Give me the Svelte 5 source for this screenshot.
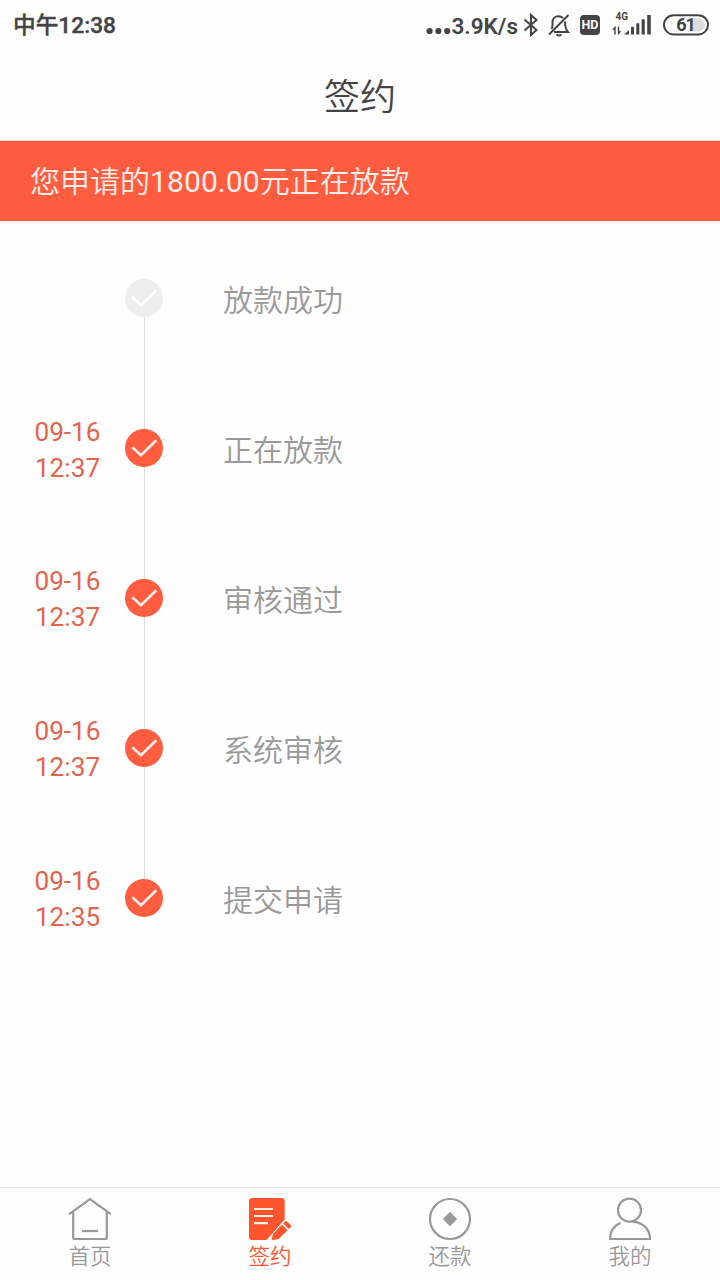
<script lang="ts">
    type Step = { label: string; date?: string; time?: string };

    const steps: Step[] = [
        { label: "放款成功" },
        { label: "正在放款", date: "09-16", time: "12:37" },
        { label: "审核通过", date: "09-16", time: "12:37" },
        { label: "系统审核", date: "09-16", time: "12:37" },
        { label: "提交申请", date: "09-16", time: "12:35" },
    ];

    const tabs = [
        { id: "home", label: "首页" },
        { id: "sign", label: "签约" },
        { id: "repay", label: "还款" },
        { id: "mine", label: "我的" },
    ];

    let active = $state("sign");
</script>

<div class="screen">
    <div class="status">
        <span class="clock">中午12:38</span>
        <div class="indicators">
            <svg class="dots" width="25" height="8" viewBox="0 0 25 8">
                <circle cx="3.6" cy="4" r="3.1" />
                <circle cx="12.4" cy="4" r="3.1" />
                <circle cx="21.2" cy="4" r="3.1" />
            </svg>
            <span class="speed">3.9K/s</span>
            <svg class="bluetooth" width="16" height="24" viewBox="0 0 16 24">
                <path d="M1.5 6.5 L13.5 17 L8 22 V2 L13.5 7 L1.5 17.5" />
            </svg>
            <svg class="bell" width="24" height="24" viewBox="0 0 24 24">
                <path d="M4.5 16 C6 14 5.5 12 5.5 9.5 C5.5 5.5 8 3.2 11.5 3.2 C13.5 3.2 15 4 16 5.2" />
                <path d="M17.8 8.5 C18 13 18 15.5 21 19 H7" />
                <path d="M21.5 2 L2 21.5" />
                <path d="M9.5 21.5 Q12 23.5 14.5 21.5" />
            </svg>
            <svg class="hd" width="20" height="20" viewBox="0 0 20 20">
                <rect width="20" height="20" rx="4" />
                <text x="10" y="14.4" text-anchor="middle">HD</text>
            </svg>
            <svg class="signal" width="40" height="26" viewBox="0 0 40 26">
                <text x="3.5" y="8">4G</text>
                <path class="arrows" d="M3 22.5 V15.5 L1 17.8 M6.5 14.5 V21.5 L8.5 19.2" />
                <path d="M12 22.5 L17 18 V22.5Z" />
                <rect x="19" y="14.8" width="3" height="7.7" rx="0.5" />
                <rect x="24.3" y="11.2" width="3" height="11.3" rx="0.5" />
                <rect x="29.6" y="7.2" width="3.2" height="15.3" rx="0.5" />
                <rect x="35.2" y="3" width="3.6" height="19.5" rx="0.5" />
            </svg>
            <svg class="battery" width="46" height="22" viewBox="0 0 46 22">
                <path class="level" d="M28 4.5 H35.5 A6.5 6.5 0 0 1 35.5 17.5 H28Z" />
                <rect x="1" y="1.2" width="44" height="19.2" rx="9.6" />
                <text x="22.5" y="16.8" text-anchor="middle">61</text>
            </svg>
        </div>
    </div>

    <header>签约</header>

    <div class="banner">您申请的<span>1800.00</span>元正在放款</div>

    <main>
        {#each steps as step}
            <div class="step">
                <div class="when">
                    {#if step.date}
                        <span>{step.date}</span>
                        <span>{step.time}</span>
                    {/if}
                </div>
                <div class="rail">
                    <i></i>
                    <svg class="node" class:done={step.date} width="38" height="38" viewBox="0 0 38 38">
                        <circle cx="19" cy="19" r="19" />
                        <path d="M7.3 18.2 L16 26.2 L31.3 11.3" />
                    </svg>
                    <i></i>
                </div>
                <div class="label">{step.label}</div>
            </div>
        {/each}
    </main>

    <nav>
        {#each tabs as tab}
            <button class:active={active === tab.id} onclick={() => (active = tab.id)}>
                <svg width="44" height="44" viewBox="0 0 44 44">
                    {#if tab.id === "home"}
                        <path d="M1.2 17.2 L22 2.2 L42.8 17.2" />
                        <path d="M5.2 14.5 V40.2 Q5.2 42 7 42 H37 Q38.8 42 38.8 40.2 V14.5" />
                        <path d="M14 34 H30" />
                    {:else if tab.id === "sign"}
                        <path class="fill" d="M4 1 H33.7 Q36.7 1 36.7 4 V22.5 L18.5 43 H4 Q1 43 1 40 V4 Q1 1 4 1Z" />
                        <path class="lines" d="M6 12 H25 M6 19 H25 M6 26.2 H20" />
                        <path class="fill" d="M23.4 43.2 L25 36.8 L34 27.8 L39.6 33.2 L30.6 42Z M35.2 26.5 L37.2 24.4 Q38 23.7 38.9 24.5 L42.8 28.1 Q43.6 29 42.8 29.9 L40.7 32Z" />
                    {:else if tab.id === "repay"}
                        <circle cx="22" cy="22" r="20" />
                        <path class="fill" d="M22 14.8 L29.2 22 L22 29.2 L14.8 22Z" />
                    {:else}
                        <ellipse cx="21.5" cy="13.2" rx="11.5" ry="11.5" />
                        <path d="M12.5 25.8 C6 28.8 2 34.5 2 42 H42 C42 32 34.5 24.8 24.5 24.8" />
                    {/if}
                </svg>
                <span>{tab.label}</span>
            </button>
        {/each}
    </nav>
</div>

<style>
    :global(body) {
        margin: 0;
        background: #fefefe;
    }

    .screen {
        width: 720px;
        height: 1280px;
        display: flex;
        flex-direction: column;
        background: #fefefe;
        font-family: Roboto, "Noto Sans CJK SC", sans-serif;
        overflow: hidden;
    }

    .status {
        height: 50px;
        box-sizing: border-box;
        padding: 0 11px 0 13px;
        display: flex;
        justify-content: space-between;
        align-items: center;
        color: #444;
        font-size: 22.5px;
        font-weight: 700;
    }

    .clock {
        line-height: 30px;
        font-size: 22.7px;
        font-weight: 500;
        -webkit-text-stroke: 0.4px #444;
        padding-top: 2px;
    }

    .indicators {
        display: flex;
        align-items: center;
    }

    .indicators svg {
        display: block;
        fill: #444;
    }

    .indicators .dots {
        margin-top: 12px;
    }

    .speed {
        margin: 2px 5px 0 1px;
        line-height: 30px;
        font-weight: 600;
    }

    .indicators .bluetooth,
    .indicators .bell {
        fill: none;
        stroke: #444;
        stroke-width: 2;
    }

    .bell {
        margin-left: 8px;
    }

    .hd {
        margin-left: 9px;
    }

    .hd text {
        fill: #fff;
        font-size: 12.5px;
    }

    .signal {
        margin-left: 12px;
    }

    .signal text {
        font-size: 10px;
    }

    .signal .arrows {
        fill: none;
        stroke: #444;
        stroke-width: 1.4;
    }

    .battery {
        margin-left: 11px;
    }

    .battery rect {
        fill: none;
        stroke: #444;
        stroke-width: 2;
    }

    .battery .level {
        fill: #ddd;
    }

    .battery text {
        font-size: 18px;
        letter-spacing: -1px;
    }

    header {
        height: 91px;
        box-sizing: border-box;
        padding-top: 3px;
        line-height: 90px;
        text-align: center;
        font-size: 36px;
        font-weight: 350;
        color: #444;
        border-bottom: 1px solid #f6d5cd;
    }

    .banner {
        height: 80px;
        line-height: 81px;
        padding-left: 30px;
        background: #ff5c40;
        color: #ffefeb;
        font-size: 30px;
        font-weight: 350;
    }

    .banner span {
        font-weight: 400;
        letter-spacing: 0.1px;
    }

    main {
        flex: 1;
        padding-top: 2px;
    }

    .step {
        height: 150px;
        display: grid;
        grid-template-columns: 91px 38px 1fr;
        padding-left: 34px;
        align-items: center;
    }

    .when {
        display: flex;
        flex-direction: column;
        width: 67px;
        padding-top: 1px;
        text-align: center;
        white-space: nowrap;
        font-size: 26.2px;
        line-height: 36px;
        color: #e4644b;
    }

    .step:nth-child(2) .when {
        padding-top: 3px;
    }

    .rail {
        height: 150px;
        display: flex;
        flex-direction: column;
        align-items: center;
    }

    .rail i {
        flex: 1;
        width: 1px;
        margin-left: 1px;
        background: #dcdcdc;
    }

    .step:first-child i:first-child,
    .step:last-child i:last-child {
        background: none;
    }

    .node {
        display: block;
        fill: #eee;
    }

    .node.done {
        fill: #ff5c40;
    }

    .node path {
        fill: none;
        stroke: #fff;
        stroke-width: 2.6;
    }

    .node.done path {
        stroke: #fff0eb;
    }

    .label {
        padding: 0 0 1px 60px;
        font-size: 30px;
        font-weight: 350;
        color: #999;
    }

    nav {
        height: 93px;
        box-sizing: border-box;
        border-top: 1px solid #e6e6e6;
        display: grid;
        grid-template-columns: repeat(4, 1fr);
    }

    nav button {
        display: flex;
        flex-direction: column;
        align-items: center;
        padding: 9px 0 0;
        border: 0;
        background: none;
        color: #999;
        font-family: inherit;
        font-size: 21.5px;
        font-weight: 350;
        line-height: 32px;
    }

    nav button.active {
        color: #ff552e;
    }

    nav svg {
        display: block;
        fill: none;
        stroke: currentColor;
        stroke-width: 2.2;
    }

    nav .fill {
        fill: currentColor;
        stroke: none;
    }

    nav .lines {
        stroke: #fff0ea;
    }
</style>
